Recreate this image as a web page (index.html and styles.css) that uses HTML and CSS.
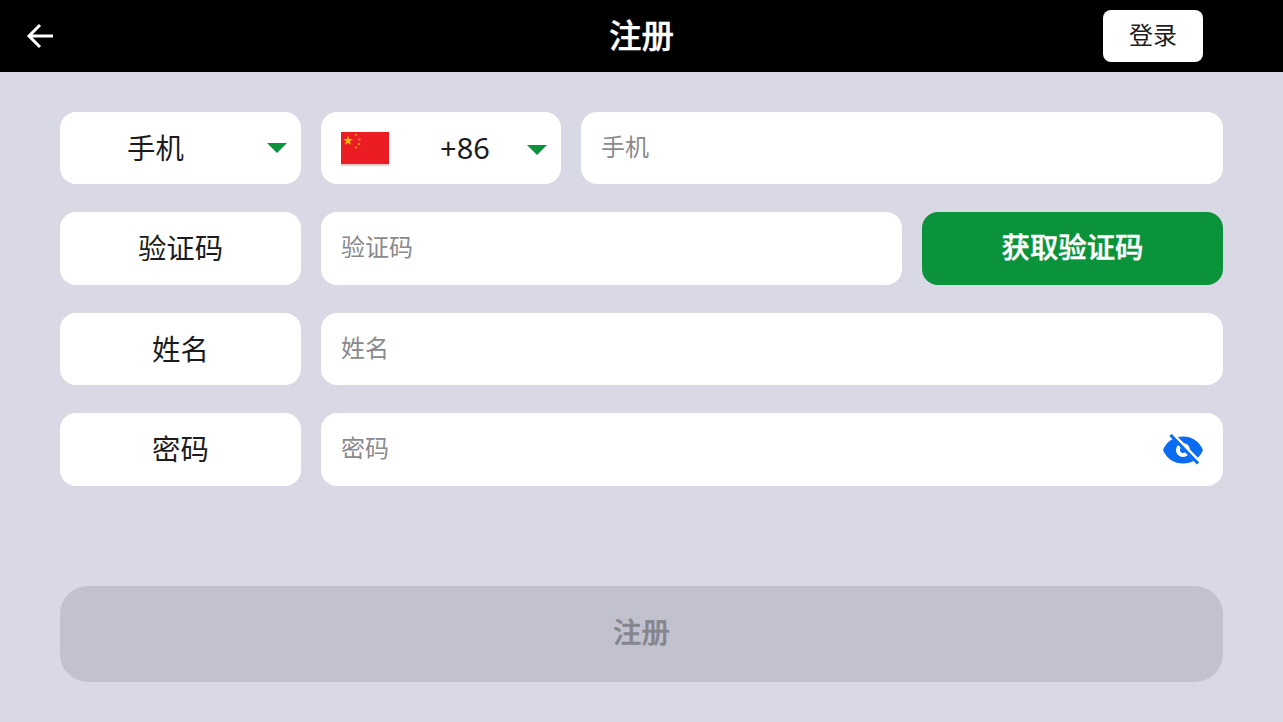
FILE: index.html
```html
<!DOCTYPE html>
<html lang="zh-CN">
<head>
<meta charset="utf-8">
<title>注册</title>
<link rel="stylesheet" href="styles.css">
</head>
<body>
<header class="topbar">
  <div class="topbar-side">
    <svg class="back-icon" viewBox="0 0 28 26" width="28" height="26"><path d="M27 13H3M14 2 3 13l11 11" fill="none" stroke="#fff" stroke-width="3"/></svg>
  </div>
  <h1 class="title">注册</h1>
  <div class="topbar-side topbar-right"><button class="login-btn">登录</button></div>
</header>
<main class="form">
  <div class="row">
    <div class="box label select"><span class="select-text">手机</span><span class="caret"></span></div>
    <div class="box country">
      <svg class="flag" viewBox="0 0 48 34" width="48" height="34">
        <rect width="48" height="32" fill="#eb1c24"/>
        <rect y="32" width="48" height="2" fill="#f7c8c8"/>
        <polygon points="7,3.500 8.200,7 12,7 9,9.300 10,13 7,10.700 4,13 5,9.300 2,7 5.800,7" fill="#ffb700"/>
        <circle cx="15" cy="3" r="1.300" fill="#f47a20"/>
        <circle cx="18.500" cy="7.500" r="1.300" fill="#f47a20"/>
        <circle cx="18" cy="12" r="1.300" fill="#f47a20"/>
        <circle cx="15" cy="15.500" r="1.300" fill="#f47a20"/>
      </svg>
      <span class="code">+86</span>
      <span class="caret"></span>
    </div>
    <div class="box field"><span class="placeholder">手机</span></div>
  </div>
  <div class="row">
    <div class="box label">验证码</div>
    <div class="box field"><span class="placeholder">验证码</span></div>
    <button class="code-btn">获取验证码</button>
  </div>
  <div class="row">
    <div class="box label">姓名</div>
    <div class="box field"><span class="placeholder">姓名</span></div>
  </div>
  <div class="row">
    <div class="box label">密码</div>
    <div class="box field field-eye">
      <span class="placeholder">密码</span>
      <svg class="eye" viewBox="0 0 40 32" width="40" height="32">
        <path fill-rule="evenodd" d="M0 16C4 7 11 2.500 20 2.500S36 7 40 16c-4 9-11 13.500-20 13.500S4 25 0 16Zm20-7a7 7 0 1 0 0 14 7 7 0 0 0 0-14Z" fill="#0a6cf0"/>
        <circle cx="20" cy="16" r="3" fill="#0a6cf0"/>
        <path d="M8.500 0 36 28.500" stroke="#fff" stroke-width="5"/>
        <path d="M7.500 1 35 29.500" stroke="#0a6cf0" stroke-width="3.200"/>
      </svg>
    </div>
  </div>
  <button class="submit-btn">注册</button>
</main>
</body>
</html>
```
FILE: styles.css
```css
* { box-sizing: border-box; }
html, body { margin: 0; height: 100%; }
body {
  background: #d9d9e5;
  font-family: "Noto Sans CJK SC", "Noto Sans", sans-serif;
  color: #1c1c1e;
  overflow: hidden;
}
button { font-family: inherit; border: 0; padding: 0; }

.topbar {
  height: 72px;
  background: #000;
  display: flex;
  align-items: center;
  justify-content: space-between;
}
.topbar-side { width: 300px; display: flex; align-items: center; padding-left: 26px; }
.topbar-right { justify-content: flex-end; padding: 0 80px 0 0; }
.back-icon { display: block; }
.title { margin: 0; padding-bottom: 6px; font-size: 32.5px; font-weight: 500; color: #fff; -webkit-text-stroke: 0.4px #fff; }
.login-btn {
  width: 100px; height: 52px;
  padding-bottom: 6px;
  background: #fff; border-radius: 8px;
  font-size: 24px; color: #1c1c1e;
}

.form { padding: 40px 60px 0; display: flex; flex-direction: column; gap: 28.3px; }
.row { display: flex; gap: 20px; height: 72.2px; }
.box { background: #fff; border-radius: 16px; display: flex; align-items: center; }
.label { flex: 0 0 241px; justify-content: center; padding-bottom: 4px; font-size: 28.4px; }
.select { justify-content: flex-start; padding: 0 14px 4px 67px; }
.select-text { flex: 1; }
.caret {
  width: 0; height: 0;
  margin-top: 3px;
  border-left: 10px solid transparent;
  border-right: 10px solid transparent;
  border-top: 10px solid #0b933c;
}
.country { flex: 0 0 240px; padding: 0 14px 0 20px; }
.flag { display: block; margin-top: 2px; }
.code { flex: 1; text-align: center; font-size: 29px; padding: 0 0 2px 14px; font-family: "Noto Sans", sans-serif; }
.field { flex: 1; padding: 0 20px; min-width: 0; }
.placeholder { font-size: 24px; color: #8a8a8e; padding-bottom: 6px; }
.field-eye { justify-content: space-between; }
.eye { display: block; }
.code-btn {
  flex: 0 0 301px;
  padding-bottom: 6px;
  background: #0b933c; color: #fff;
  border-radius: 16px;
  font-size: 28.4px; font-weight: 500;
  -webkit-text-stroke: 0.4px #fff;
}
.submit-btn {
  margin-top: 72px;
  height: 96px;
  padding-bottom: 6px;
  background: #c2c2ce; color: #85858f;
  border-radius: 28px;
  font-size: 28.4px; font-weight: 500;
  -webkit-text-stroke: 0.4px #85858f;
}
```
